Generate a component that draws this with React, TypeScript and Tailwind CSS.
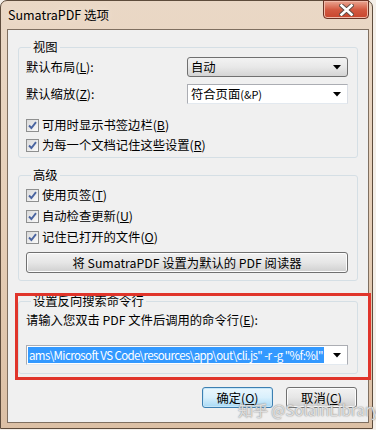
import React from 'react'

const ui = { fontFamily: '"Noto Sans CJK SC", "Liberation Sans", sans-serif' }

function Arrow() {
  return (
    <svg width="8" height="5" viewBox="0 0 8 5" className="shrink-0">
      <path d="M0 0 H8 L4 4.5 Z" fill="#000" />
    </svg>
  )
}

function Check({ children }: { children: React.ReactNode }) {
  return (
    <div className="flex items-center h-[16px] gap-[3px]">
      <span className="w-[13px] h-[13px] border border-[#8e8f8f] bg-gradient-to-br from-[#dadada] to-[#fafafa] flex items-center justify-center">
        <svg width="11" height="11" viewBox="0 0 11 11">
          <path d="M2 5.5 L4.4 8 L9 2.2" fill="none" stroke="#4a64a0" strokeWidth="1.9" />
        </svg>
      </span>
      <span>{children}</span>
    </div>
  )
}

function Key({ k }: { k: string }) {
  return <span>(<u className="underline-offset-1">{k}</u>)</span>
}

function Group({ title, className, children }: { title: string; className?: string; children: React.ReactNode }) {
  return (
    <fieldset className={'border border-[#d5dfe5] rounded-[3px] pl-[7px] pr-[9px] ' + (className || '')}>
      <legend className="ml-[5px] px-[2px] leading-[14px]">{title}</legend>
      {children}
    </fieldset>
  )
}

function Btn({ children, def, className }: { children: React.ReactNode; def?: boolean; className?: string }) {
  return (
    <div
      className={
        'h-[21px] rounded-[3px] border flex items-center justify-center ' +
        (def
          ? 'border-[#3c7fb1] bg-gradient-to-b from-[#eaf6fd] via-[#d9f0fc] to-[#a7d9f5] shadow-[inset_0_0_0_1px_#c6e6f8] '
          : 'border-[#707070] bg-gradient-to-b from-[#f2f2f2] via-[#e6e6e6] to-[#cfcfcf] shadow-[inset_0_0_0_1px_#fcfcfc] ') +
        (className || '')
      }
    >
      {children}
    </div>
  )
}

export default function App() {
  return (
    <div className="w-[376px] h-[430px] bg-[#f4efe9] text-[12.3px] text-black leading-[16px]" style={ui}>
      <div className="relative w-[373px] h-[429px] rounded-t-[7px] border border-[#5e4c3c] bg-gradient-to-b from-[#ead8c6] via-[#e6cfb8] to-[#dcc0a5] flex flex-col pl-[6px] pr-[3px] pb-[5px]">
        {/* title bar */}
        <div className="h-[28px] flex items-start justify-between shrink-0">
          <span className="mt-[6px] ml-[1px] text-[12.5px] leading-[16px] text-black [text-shadow:0_0_6px_#f3e6d8]">SumatraPDF 选项</span>
          <div className="w-[46px] h-[19px] -mt-[1px] rounded-b-[4px] border border-[#6b3426] bg-gradient-to-b from-[#e9a592] via-[#d35a42] to-[#c8452c] flex items-center justify-center shadow-[inset_0_0_0_1px_#f0b9a8]">
            <svg width="15" height="12" viewBox="0 0 15 12">
              <path d="M2.5 1.5 L12.5 10.5 M12.5 1.5 L2.5 10.5" stroke="#5a4a44" strokeWidth="4.4" strokeLinecap="square" />
              <path d="M2.5 1.5 L12.5 10.5 M12.5 1.5 L2.5 10.5" stroke="#fff" strokeWidth="2.6" strokeLinecap="square" />
            </svg>
          </div>
        </div>

        {/* client area */}
        <div className="flex-1 bg-[#f0f0f0] border border-[#7f6f60] flex flex-col px-[10px] pt-[10px]">
          <Group title="视图">
            <div className="pt-[3px] flex flex-col">
              <div className="h-[20px] flex items-center justify-between">
                <span>默认布局<Key k="L" />:</span>
                <div className="w-[161px] h-[20px] rounded-[3px] border border-[#707070] bg-gradient-to-b from-[#f3f3f3] via-[#e8e8e8] to-[#d4d4d4] flex items-center justify-between pl-[3px] pr-[6px]">
                  <span>自动</span>
                  <Arrow />
                </div>
              </div>
              <div className="mt-[7px] h-[20px] flex items-center justify-between">
                <span>默认缩放<Key k="Z" />:</span>
                <div className="w-[161px] h-[20px] border border-[#abadb3] border-b-[#e3e9ef] border-r-[#dbdfe6] bg-white flex items-center justify-between pl-[3px] pr-[6px]">
                  <span>符合页面<span className="text-[11px]">(&amp;P)</span></span>
                  <Arrow />
                </div>
              </div>
              <div className="mt-[13px]">
                <Check>可用时显示书签边栏<Key k="B" /></Check>
              </div>
              <div className="mt-[4px] mb-[4px]">
                <Check>为每一个文档记住这些设置<Key k="R" /></Check>
              </div>
            </div>
          </Group>

          <Group title="高级" className="mt-[10px]">
            <div className="pt-[5px] flex flex-col gap-[5px]">
              <Check>使用页签<Key k="T" /></Check>
              <Check>自动检查更新<Key k="U" /></Check>
              <Check>记住已打开的文件<Key k="O" /></Check>
            </div>
            <Btn className="mt-[7px] mb-[7px] w-[322px]">将 SumatraPDF 设置为默认的 PDF 阅读器</Btn>
          </Group>

          <Group title="设置反向搜索命令行" className="mt-[13px]">
            <div className="pt-[4px]">请输入您双击 PDF 文件后调用的命令行<Key k="E" />:</div>
            <div className="mt-[17px] mb-[8px] w-[322px] h-[20px] border border-[#abadb3] border-b-[#e3e9ef] bg-white flex items-center justify-between pl-[1px] pr-[6px]">
              <span className="bg-[#3399ff] text-white leading-[16px] px-[1px] whitespace-nowrap overflow-hidden text-[11.5px] tracking-[-0.6px]">
                ams\Microsoft VS Code\resources\app\out\cli.js" -r -g "%f:%l"
              </span>
              <Arrow />
            </div>
          </Group>

          <div className="mt-[13px] flex justify-end gap-[13px] pr-[1px]">
            <Btn def className="w-[71px]">确定<Key k="O" /></Btn>
            <Btn className="w-[71px]">取消<Key k="C" /></Btn>
          </div>
        </div>

        {/* red highlight annotation */}
        <div className="absolute left-[14px] top-[292px] w-[356px] h-[87px] border-[3px] border-[#e0352b] pointer-events-none" />

        {/* watermark */}
        <div className="absolute left-[237px] top-[399px] text-[15px] leading-[20px] text-[#f4f4f4]/80 [text-shadow:0_0_1px_#8a8a8a,0_0_2px_#a0a0a0] pointer-events-none whitespace-nowrap">
          知乎 @SolainLibrary
        </div>
      </div>
    </div>
  )
}
